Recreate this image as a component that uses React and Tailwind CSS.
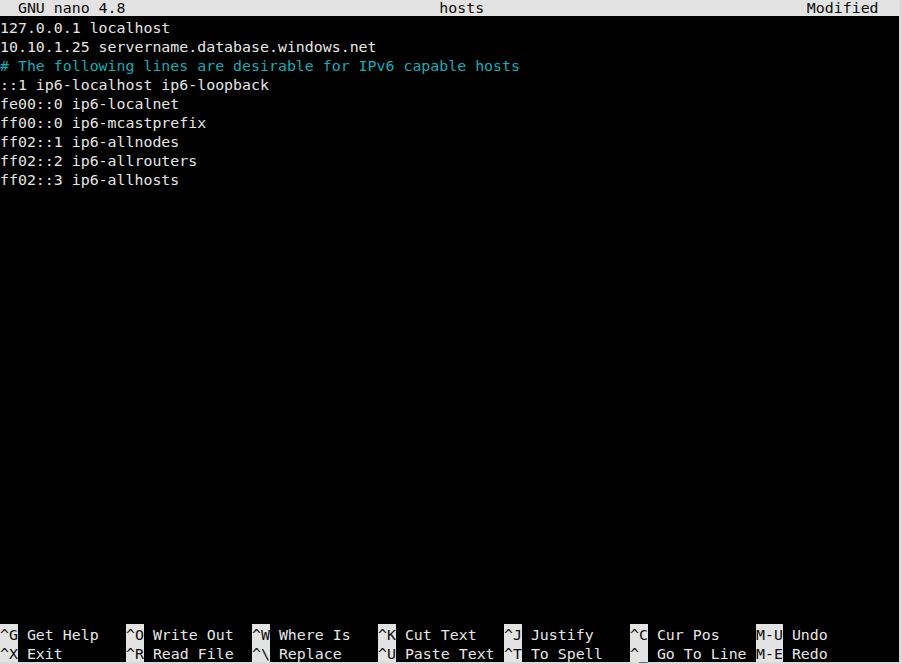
const LINES = [
  { text: "127.0.0.1 localhost" },
  { text: "10.10.1.25 servername.database.windows.net" },
  { text: "# The following lines are desirable for IPv6 capable hosts", comment: true },
  { text: "::1 ip6-localhost ip6-loopback" },
  { text: "fe00::0 ip6-localnet" },
  { text: "ff00::0 ip6-mcastprefix" },
  { text: "ff02::1 ip6-allnodes" },
  { text: "ff02::2 ip6-allrouters" },
  { text: "ff02::3 ip6-allhosts" },
];

const SHORTCUTS = [
  [
    ["^G", "Get Help"],
    ["^O", "Write Out"],
    ["^W", "Where Is"],
    ["^K", "Cut Text"],
    ["^J", "Justify"],
    ["^C", "Cur Pos"],
    ["M-U", "Undo"],
  ],
  [
    ["^X", "Exit"],
    ["^R", "Read File"],
    ["^\\", "Replace"],
    ["^U", "Paste Text"],
    ["^T", "To Spell"],
    ["^_", "Go To Line"],
    ["M-E", "Redo"],
  ],
];

const pad = (s, n) => s + " ".repeat(Math.max(0, n - s.length));

export default function App() {
  const title = pad(pad("  GNU nano 4.8", 49) + "hosts", 90) + "Modified";

  return (
    <div
      className="w-[902px] h-[664px] bg-[#d9d9d9] overflow-hidden"
      style={{ fontFamily: '"DejaVu Sans Mono", "Liberation Mono", monospace' }}
    >
      <div className="w-[899px] h-[662px] bg-black flex flex-col text-[14.9px] text-[#e6e6e6]">
        {/* title bar */}
        <div className="h-[16px] leading-[16px] bg-[#e3e3e3] text-[#0c0c0c] whitespace-pre shrink-0 overflow-hidden">
          {title}
        </div>

        {/* buffer */}
        <div className="flex-1 flex flex-col pt-[3px]">
          {LINES.map((l, i) => (
            <div
              key={i}
              className={`h-[19px] leading-[19px] whitespace-pre ${l.comment ? "text-[#1aaab4]" : ""}`}
            >
              {l.text}
            </div>
          ))}
        </div>

        {/* shortcut bar */}
        <div className="flex flex-col shrink-0">
          {SHORTCUTS.map((row, r) => (
            <div key={r} className="flex h-[19px] leading-[23px]">
              {row.map(([key, label]) => (
                <div key={key} className="w-[126px] shrink-0 flex whitespace-pre">
                  <span className="bg-[#e3e3e3] text-[#0c0c0c]">{key}</span>
                  <span> {label}</span>
                </div>
              ))}
            </div>
          ))}
        </div>
      </div>
    </div>
  );
}
